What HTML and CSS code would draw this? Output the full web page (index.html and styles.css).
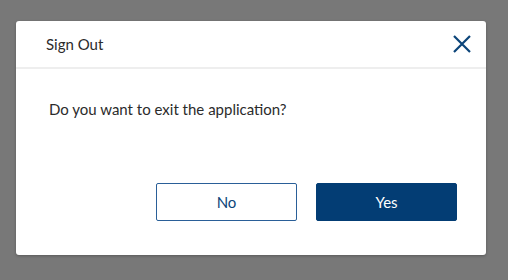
FILE: index.html
```html
<!DOCTYPE html>
<html lang="en">
  <head>
    <meta charset="UTF-8" />
    <link rel="stylesheet" href="styles.css">
  </head>
  <body>
    <div class="overlay">
      <div class="dialog">
        <div class="dialog-header">
          <span class="dialog-title">Sign Out</span>
          <button class="close-btn" aria-label="Close">
            <svg width="20" height="20" viewBox="0 0 20 20">
              <path d="M2 2 L18 18 M18 2 L2 18" stroke="#0b4479" stroke-width="2.2" fill="none" />
            </svg>
          </button>
        </div>
        <div class="dialog-body">
          <p>Do you want to exit the application?</p>
        </div>
        <div class="dialog-footer">
          <button class="btn btn-outline">No</button>
          <button class="btn btn-primary">Yes</button>
        </div>
      </div>
    </div>
  </body>
</html>
```

FILE: styles.css
```css
body {
  margin: 0;
  font-family: Lato, "Noto Sans", sans-serif;
}
.overlay {
  width: 508px;
  height: 280px;
  background: #787878;
  padding: 21px 22px 0 16px;
  box-sizing: border-box;
}
.dialog {
  width: 470px;
  height: 234px;
  background: #fff;
  border-radius: 3px;
  box-shadow: 0 1px 3px rgba(0, 0, 0, 0.25);
  display: flex;
  flex-direction: column;
}
.dialog-header {
  height: 46px;
  border-bottom: 2px solid #eeeeee;
  display: flex;
  align-items: center;
  justify-content: space-between;
  padding: 0 14px 0 30px;
}
.dialog-title {
  font-size: 15px;
  color: #2b2b2b;
}
.close-btn {
  background: none;
  border: none;
  padding: 0;
  width: 20px;
  height: 20px;
  cursor: pointer;
}
.dialog-body {
  padding: 0 33px;
  flex: 1;
}
.dialog-body p {
  margin: 0;
  margin-top: 31px;
  font-size: 15px;
  color: #2b2b2b;
}
.dialog-footer {
  display: flex;
  justify-content: flex-end;
  gap: 19px;
  padding: 0 29px 34px 0;
}
.btn {
  width: 141px;
  height: 38px;
  border-radius: 2px;
  font-family: Lato, "Noto Sans", sans-serif;
  font-size: 15px;
}
.btn-outline {
  background: #fff;
  border: 1.5px solid #2a5f98;
  color: #0b4479;
}
.btn-primary {
  background: #033d74;
  border: 1px solid #033d74;
  color: #fff;
}
```
